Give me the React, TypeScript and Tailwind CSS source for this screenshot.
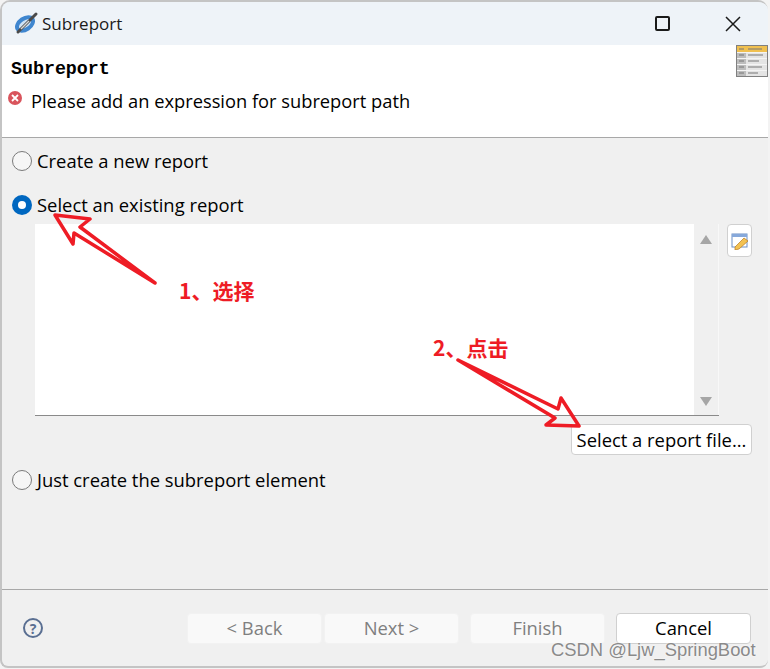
import React from "react";

const ui = "font-['Open_Sans','Noto_Sans',sans-serif]";

function Radio({ checked, label }: { checked?: boolean; label: string }) {
  return (
    <div className="flex items-center h-[24px]">
      {checked ? (
        <span className="w-[20px] h-[20px] rounded-full bg-[#0067c0] flex items-center justify-center">
          <span className="w-[8px] h-[8px] rounded-full bg-white" />
        </span>
      ) : (
        <span className="w-[20px] h-[20px] rounded-full border border-[#7a7a7a] bg-[#f6f6f6]" />
      )}
      <span className="ml-[5px] text-[18.4px] text-black">{label}</span>
    </div>
  );
}

function FooterButton({ label, disabled }: { label: string; disabled?: boolean }) {
  return (
    <div
      className={
        disabled
          ? "w-[135px] h-[31px] rounded-[4px] border border-[#f2f2f2] bg-[#f9f9f9] text-[#7f7f7f] text-[18.4px] flex items-center justify-center"
          : "w-[135px] h-[31px] rounded-[4px] border border-[#d0d0d0] bg-white text-black text-[18.4px] flex items-center justify-center"
      }
    >
      {label}
    </div>
  );
}

function ArrowOverlay() {
  return (
    <svg className="absolute left-0 top-0 pointer-events-none" width="770" height="669" viewBox="0 0 770 669">
      <path
        d="M155 283 L80 227 L90 219 L55 215 L73 244 L74 233 Z"
        fill="none"
        stroke="#ee1c25"
        strokeWidth="3.5"
        strokeLinejoin="round"
      />
      <path
        d="M458 360 L558 409 L561 398 L579 426 L546 425 L555 418 Z"
        fill="none"
        stroke="#ee1c25"
        strokeWidth="3.5"
        strokeLinejoin="round"
      />
    </svg>
  );
}

export default function App() {
  return (
    <div className={`relative w-[770px] h-[669px] bg-[#f3f3f3] overflow-hidden ${ui}`}>
      <div className="w-[768px] h-[668px] rounded-t-[10px] rounded-b-[8px] border-2 border-[#c4c4c4] border-r-0 flex flex-col overflow-hidden bg-[#f0f0f0]">
        <div className="h-[43px] shrink-0 bg-[#eef3f8] flex items-center pl-[11px]">
          <svg width="26" height="26" viewBox="0 0 26 26">
            <ellipse cx="12" cy="13" rx="11" ry="7.5" transform="rotate(-35 12 13)" fill="#3f86cf" />
            <ellipse cx="12" cy="13" rx="7" ry="3.5" transform="rotate(-35 12 13)" fill="#cfe2f5" />
            <path d="M5 21 L23 3" stroke="#4a4a4a" strokeWidth="3" strokeLinecap="round" />
            <path d="M8 18 L16 10" stroke="#d8d8d8" strokeWidth="1.5" />
          </svg>
          <span className="ml-[3px] text-[17px] text-[#1a1a1a]">Subreport</span>
          <div className="ml-auto flex items-center">
            <span className="w-[15px] h-[15px] border-2 border-[#1a1a1a] rounded-[2px]" />
            <svg className="ml-[55px] mr-[27px]" width="16" height="16" viewBox="0 0 16 16">
              <path d="M1 1 L15 15 M15 1 L1 15" stroke="#1a1a1a" strokeWidth="1.5" />
            </svg>
          </div>
        </div>

        <div className="h-[93px] shrink-0 bg-white border-b border-[#a8a8a8] pl-[9px] flex relative">
          <div className="flex-1 min-w-0">
            <div className="mt-[12px] h-[24px] font-['Liberation_Mono',monospace] font-bold text-[18.3px] leading-[24px] text-black">
              Subreport
            </div>
            <div className="mt-[8px] flex items-start">
              <span className="w-[14px] h-[14px] -ml-[3px] mt-[2px] rounded-full bg-[#d9545c] flex items-center justify-center">
                <svg width="8" height="8" viewBox="0 0 8 8">
                  <path d="M1 1 L7 7 M7 1 L1 7" stroke="#ffffff" strokeWidth="1.8" />
                </svg>
              </span>
              <span className="ml-[9px] text-[18.3px] leading-[24px] text-black">
                Please add an expression for subreport path
              </span>
            </div>
          </div>
          <svg className="shrink-0" width="32" height="32" viewBox="0 0 32 32">
            <rect x="0.5" y="0.5" width="31" height="31" fill="#e4e4e4" stroke="#808080" />
            <rect x="1" y="1" width="30" height="6" fill="#f0c050" />
            <rect x="1" y="7" width="9" height="24" fill="#bdbdbd" />
            <path d="M1 7.5H31M1 13.5H31M1 19.5H31M1 25.5H31" stroke="#f4f4f4" />
            <path d="M3 4H8M12 4H26M3 10H8M12 10H27M3 16H8M12 16H23M3 22H8M12 22H26M3 28H8M12 28H22" stroke="#777777" />
          </svg>
        </div>

        <div className="flex-1 min-h-0 pl-[10px] pt-[11px] flex flex-col">
          <Radio label="Create a new report" />
          <div className="mt-[20px]">
            <Radio checked label="Select an existing report" />
          </div>
          <div className="flex mt-[7px]">
            <div className="ml-[23px] w-[684px] h-[192px] bg-white border-b border-[#8a8a8a] flex justify-end">
              <div className="w-[25px] h-full bg-[#f0f0f0] border-r border-[#f8f8f8] flex flex-col items-center justify-between pt-[11px] pb-[9px]">
                <svg width="12" height="9" viewBox="0 0 12 9"><path d="M6 0 L12 9 H0 Z" fill="#a6a6a6" /></svg>
                <svg width="12" height="9" viewBox="0 0 12 9"><path d="M0 0 H12 L6 9 Z" fill="#a6a6a6" /></svg>
              </div>
            </div>
            <div className="ml-[8px] w-[25px] h-[33px] rounded-[4px] border border-[#d0d0d0] bg-white flex items-center justify-center">
              <svg width="18" height="18" viewBox="0 0 18 18">
                <rect x="1" y="2" width="15" height="13" fill="#ffffff" stroke="#6d8fc4" />
                <rect x="1" y="2" width="15" height="3" fill="#86a8da" />
                <path d="M4 15 L13 6 L17 9 L8 17 L4 18 Z" fill="#f3c252" stroke="#b87a20" strokeWidth="0.7" />
              </svg>
            </div>
          </div>
          <div className="flex justify-end mt-[8px] pr-[16px]">
            <div className="w-[181px] h-[31px] rounded-[4px] border border-[#d0d0d0] bg-white text-[18.4px] text-black flex items-center justify-center">
              Select a report file...
            </div>
          </div>
          <div className="mt-[13px]">
            <Radio label="Just create the subreport element" />
          </div>
        </div>

        <div className="h-[77px] shrink-0 border-t border-[#a8a8a8] flex items-center pl-[21px] pr-[17px]">
          <span className="w-[20px] h-[20px] rounded-full border-2 border-[#5a6f92] text-[#5a6f92] text-[14px] font-bold flex items-center justify-center">
            ?
          </span>
          <div className="ml-auto flex items-center">
            <FooterButton disabled label="< Back" />
            <div className="ml-[2px]"><FooterButton disabled label="Next >" /></div>
            <div className="ml-[11px]"><FooterButton disabled label="Finish" /></div>
            <div className="ml-[11px]"><FooterButton label="Cancel" /></div>
          </div>
        </div>
      </div>

      <ArrowOverlay />
      <div className="absolute left-[179px] top-[277px] text-[21px] leading-[26px] font-bold text-[#ee1c25] font-['Noto_Sans_CJK_SC','Noto_Sans',sans-serif] [text-shadow:0_0_3px_#ffffff]">
        1、选择
      </div>
      <div className="absolute left-[433px] top-[334px] text-[21px] leading-[26px] font-bold text-[#ee1c25] font-['Noto_Sans_CJK_SC','Noto_Sans',sans-serif] [text-shadow:0_0_3px_#ffffff]">
        2、点击
      </div>
      <div className="absolute left-[551px] top-[638px] text-[18.4px] leading-[24px] text-[#8a8a8a] font-['Liberation_Sans',sans-serif] [text-shadow:0_0_2px_#ffffff]">
        CSDN @Ljw_SpringBoot
      </div>
    </div>
  );
}
